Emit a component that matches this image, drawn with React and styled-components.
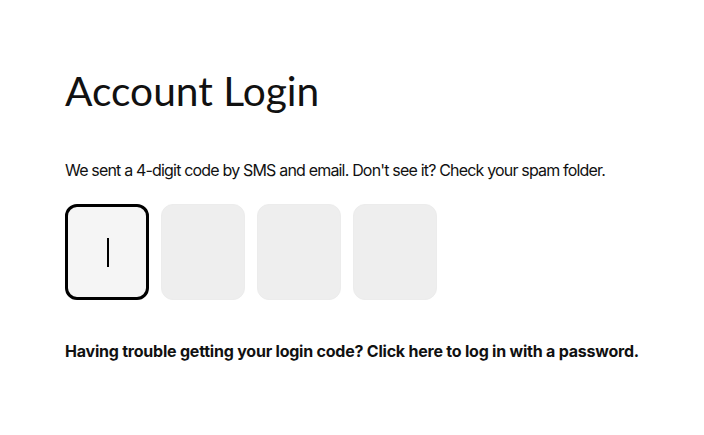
import React from "react";
import styled, { createGlobalStyle } from "styled-components";

const Global = createGlobalStyle`
  html, body { margin: 0; padding: 0; background: #ffffff; }
  body { font-family: Inter, "Noto Sans", sans-serif; color: #111; }
`;

const Page = styled.main`
  padding: 63px 65px;
  display: flex;
  flex-direction: column;
`;

const Title = styled.h1`
  margin: 0;
  font-family: Lato, "Noto Sans", sans-serif;
  font-weight: 400;
  font-size: 40.7px;
  line-height: 56px;
  color: #111;
`;

const Info = styled.p`
  margin: 39px 0 0;
  font-size: 16px;
  line-height: 24px;
  letter-spacing: -0.82px;
  color: #111;
`;

const Codes = styled.div`
  display: flex;
  gap: 12px;
  margin-top: 22px;
`;

const Box = styled.div`
  box-sizing: border-box;
  width: 84px;
  height: 96px;
  border-radius: 12px;
  background: ${(p) => (p.$active ? "#f5f5f5" : "#eeeeee")};
  border: ${(p) => (p.$active ? "3px solid #000" : "1px solid #ececec")};
  display: flex;
  align-items: center;
  justify-content: center;
`;

const Caret = styled.span`
  width: 2px;
  height: 29px;
  margin-left: 1px;
  background: #000;
`;

const Help = styled.a`
  margin-top: 39px;
  font-size: 16px;
  font-weight: 700;
  letter-spacing: -0.22px;
  line-height: 24px;
  color: #111;
  text-decoration: none;
`;

export default function App() {
  return (
    <>
      <Global />
      <Page>
        <Title>Account Login</Title>
        <Info>We sent a 4-digit code by SMS and email. Don't see it? Check your spam folder.</Info>
        <Codes>
          <Box $active><Caret /></Box>
          <Box />
          <Box />
          <Box />
        </Codes>
        <Help href="#">Having trouble getting your login code? Click here to log in with a password.</Help>
      </Page>
    </>
  );
}
